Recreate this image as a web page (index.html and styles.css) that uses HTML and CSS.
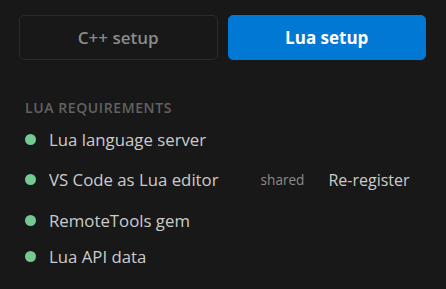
FILE: index.html
```html
<!DOCTYPE html>
<html lang="en">
<head>
    <meta charset="UTF-8">
    <meta name="viewport" content="width=device-width, initial-scale=1.0">
    <title>Setup</title>
    <link rel="stylesheet" href="styles.css">
</head>
<body>
    <div class="tabs">
        <button class="tab">C++ setup</button>
        <button class="tab active">Lua setup</button>
    </div>

    <div class="section">
        <div class="heading">Lua requirements</div>
        <ul class="reqs">
            <li class="req"><span class="dot"></span><span class="name">Lua language server</span></li>
            <li class="req tall">
                <span class="dot"></span><span class="name">VS Code as Lua editor</span>
                <span class="tag">shared</span>
                <button class="link">Re-register</button>
            </li>
            <li class="req"><span class="dot"></span><span class="name">RemoteTools gem</span></li>
            <li class="req"><span class="dot"></span><span class="name">Lua API data</span></li>
        </ul>
    </div>
</body>
</html>
```

FILE: styles.css
```css
body {
    margin: 0; background: #181818; color: #cccccc;
    font-family: "Open Sans", "Noto Sans", sans-serif;
}
.tabs {
    display: grid; grid-template-columns: 1fr 1fr; gap: 10px;
    padding: 15px 20px 0 19px;
}
.tab {
    height: 45px; border: 1px solid #2b2b2b; border-radius: 5px;
    background: #181818; color: #8b8b8b;
    font-family: inherit; font-size: 17px; font-weight: 600;
}
.tab.active { background: #0078d4; border-color: #0078d4; color: #ffffff; font-weight: 700; }

.section { padding: 39px 0 0 25px; }
.heading {
    font-size: 14px; font-weight: 600; color: #626262; line-height: 18px;
    text-transform: uppercase; letter-spacing: 0.6px;
}
.reqs { list-style: none; margin: 4px 0 0; padding: 0; }
.req { display: flex; align-items: center; height: 36px; font-size: 16.8px; }
.req.tall { height: 45px; }
.dot {
    width: 11px; height: 11px; border-radius: 50%;
    background: #73c991; margin-right: 13px;
}
.name { color: #cccccc; }
.tag { margin-left: 42px; font-size: 13.6px; color: #8b8b8b; }
.link {
    margin-left: 16px; padding: 4px 8px; border: none; background: none;
    color: #cccccc; font-family: inherit; font-size: 16px;
}
```
